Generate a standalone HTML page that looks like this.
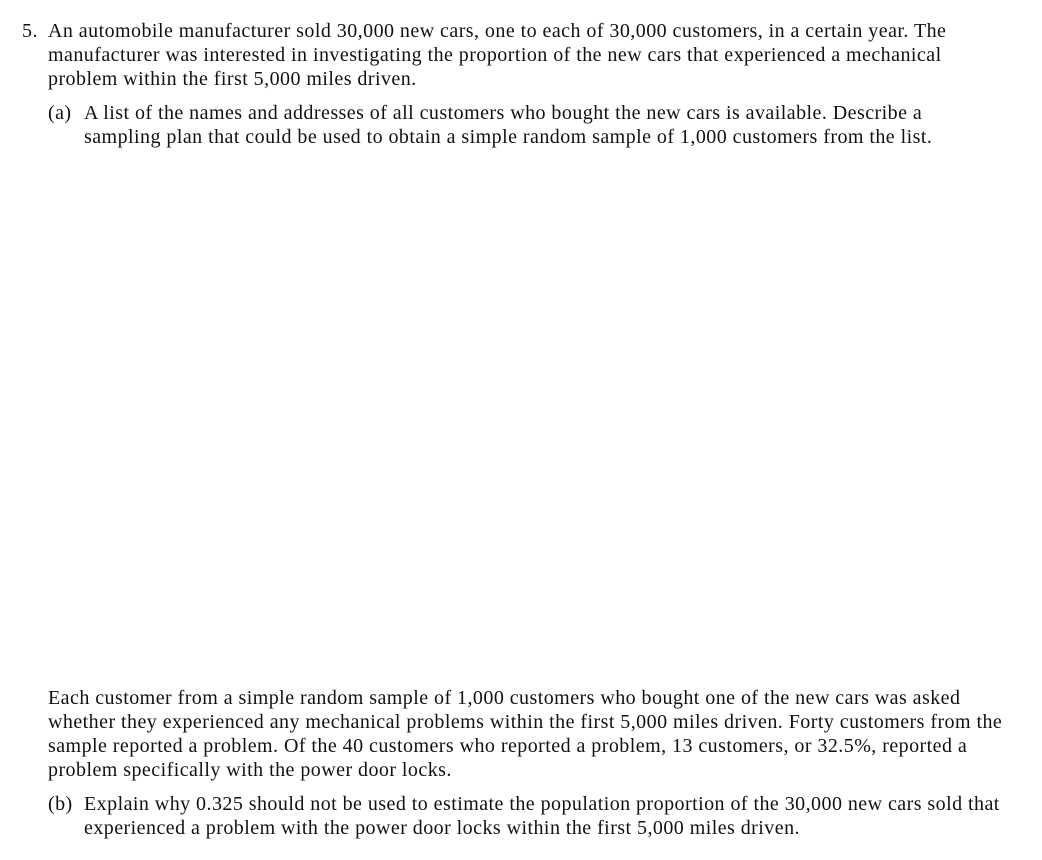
<!DOCTYPE html>
<html><head><meta charset="utf-8"><style>
body{margin:0;background:#fff;width:1042px;height:860px;overflow:hidden;position:relative;font-family:"Liberation Serif",serif;font-size:20px;letter-spacing:0.45px;color:#111}
.l{position:absolute;white-space:nowrap;line-height:24px}
</style></head><body>
<div class="l" style="left:22px;top:19px">5.</div>
<div class="l" style="left:48px;top:19px">An automobile manufacturer sold 30,000 new cars, one to each of 30,000 customers, in a certain year. The</div>
<div class="l" style="left:48px;top:43px">manufacturer was interested in investigating the proportion of the new cars that experienced a mechanical</div>
<div class="l" style="left:48px;top:67px">problem within the first 5,000 miles driven.</div>
<div class="l" style="left:48px;top:101px">(a)</div>
<div class="l" style="left:84px;top:101px">A list of the names and addresses of all customers who bought the new cars is available. Describe a</div>
<div class="l" style="left:84px;top:125px">sampling plan that could be used to obtain a simple random sample of 1,000 customers from the list.</div>
<div class="l" style="left:48px;top:686px">Each customer from a simple random sample of 1,000 customers who bought one of the new cars was asked</div>
<div class="l" style="left:48px;top:710px">whether they experienced any mechanical problems within the first 5,000 miles driven. Forty customers from the</div>
<div class="l" style="left:48px;top:734px">sample reported a problem. Of the 40 customers who reported a problem, 13 customers, or 32.5%, reported a</div>
<div class="l" style="left:48px;top:758px">problem specifically with the power door locks.</div>
<div class="l" style="left:48px;top:792px">(b)</div>
<div class="l" style="left:84px;top:792px">Explain why 0.325 should not be used to estimate the population proportion of the 30,000 new cars sold that</div>
<div class="l" style="left:84px;top:816px">experienced a problem with the power door locks within the first 5,000 miles driven.</div>
</body></html>
